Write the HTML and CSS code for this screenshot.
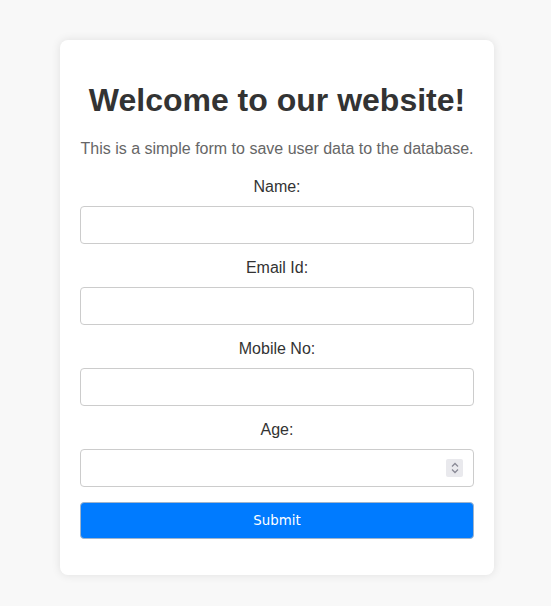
FILE: index.html
```html
<!DOCTYPE html>
<html>
<head>
<meta charset="utf-8">
<link rel="stylesheet" href="styles.css">
</head>
<body>
<div class="page">
  <div class="card">
    <h1 class="title">Welcome to our website!</h1>
    <p class="intro">This is a simple form to save user data to the database.</p>
    <form class="form">
      <label class="label" for="name">Name:</label>
      <input class="field" id="name" type="text">
      <label class="label" for="email">Email Id:</label>
      <input class="field" id="email" type="email">
      <label class="label" for="mobile">Mobile No:</label>
      <input class="field" id="mobile" type="text">
      <label class="label" for="age">Age:</label>
      <div class="field number">
        <span class="spin">
          <svg width="10" height="14" viewBox="0 0 10 14"><path d="M2 5.5 L5 2.5 L8 5.5" fill="none" stroke="#8a8a96" stroke-width="1.3"/><path d="M2 8.5 L5 11.5 L8 8.5" fill="none" stroke="#8a8a96" stroke-width="1.3"/></svg>
        </span>
      </div>
      <button class="submit" type="button">Submit</button>
    </form>
  </div>
</div>
</body>
</html>
```
FILE: styles.css
```css
html, body {
  margin: 0;
  padding: 0;
  background: #f8f8f8;
  font-family: "Liberation Sans", Arial, sans-serif;
}
.page {
  padding: 40px 0 30px 60px;
}
.card {
  width: 394px;
  padding: 20px;
  background: #fff;
  border-radius: 8px;
  box-shadow: 0 0 10px rgba(0, 0, 0, 0.1);
  text-align: center;
}
.title {
  font-size: 32px;
  font-weight: bold;
  color: #333;
  margin: 22px 0 21px;
  line-height: 37px;
}
.intro {
  font-size: 16px;
  color: #666;
  margin: 0 0 20px;
  line-height: 18px;
}
.form {
  display: flex;
  flex-direction: column;
  margin: 0 0 16px;
}
.label {
  display: block;
  font-size: 16px;
  color: #333;
  line-height: 18px;
  margin-bottom: 10px;
}
.field {
  box-sizing: border-box;
  width: 100%;
  height: 38px;
  border: 1px solid #ccc;
  border-radius: 4px;
  margin: 0 0 15px;
  padding: 10px;
  font-size: 16px;
  background: #fff;
}
.number {
  display: flex;
  justify-content: flex-end;
  align-items: center;
  padding: 0 10px 0 0;
}
.spin {
  display: flex;
  align-items: center;
  justify-content: center;
  width: 17px;
  height: 18px;
  background: #e9e9ed;
  border-radius: 2px;
}
.submit {
  box-sizing: border-box;
  width: 100%;
  height: 37px;
  background: #007bff;
  color: #fff;
  border: 1px solid #9fb4cc;
  border-radius: 4px;
  font-family: "DejaVu Sans", sans-serif;
  font-size: 13.33px;
  padding: 0;
}
```
